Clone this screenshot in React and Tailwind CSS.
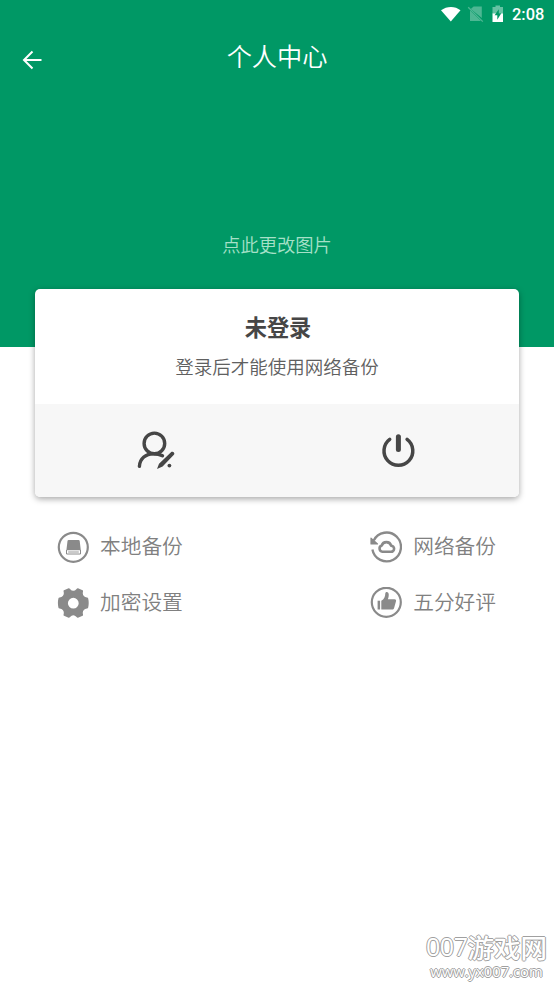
import React from "react";

const StatusBar = () => (
  <div className="flex h-7 items-center justify-end pr-[9px] text-white">
    <svg width="20" height="16" viewBox="0 0 20 16" className="shrink-0">
      <path d="M0 4.300C5.800 -.2 14.200 -.2 19.500 4.300L9.800 15.500Z" fill="currentColor" />
    </svg>
    <svg width="18" height="18" viewBox="0 0 18 18" className="ml-[6px] shrink-0">
      <path d="M6.600 1.500h8.200v11.600L3.800 3.900ZM3 5.200 14 16H3Z" fill="#4db793" />
      <path d="M1.200 2.200 15.800 16.600" stroke="#4db793" strokeWidth="1.300" />
    </svg>
    <svg width="12" height="18" viewBox="0 0 12 18" className="ml-[7px] shrink-0">
      <path d="M3.500 2V.5H8V2h3v7H.5V2Z" fill="#66c2a3" />
      <path d="M.5 8.500H11V17H.5Z" fill="currentColor" />
      <path d="M6.800 4.200 2.600 10.300h2.700v4.500l4-6.500H6.800Z" fill="#009865" />
    </svg>
    <span className="ml-[8px] w-[33px] whitespace-nowrap pt-px font-['Roboto',sans-serif] text-[16.400px] font-medium leading-7">2:08</span>
  </div>
);

const UserEditIcon = () => (
  <svg width="40" height="40" viewBox="0 0 40 40" fill="none" stroke="#464646" strokeWidth="3.400" strokeLinecap="round">
    <circle cx="18.400" cy="13.400" r="10.300" />
    <path d="M3.400 36.300C3.900 28.500 10 23.700 17.300 23.700c3.600 0 6.300.5 9.200 2" />
    <path d="M35 22.200c1.500-1.500 4.500.8 2.900 2.600L26.600 36.600l-5.600 2.400 2-5.200Z" fill="#464646" stroke="none" />
    <circle cx="33.400" cy="35.600" r="1.900" fill="#464646" stroke="none" />
  </svg>
);

const PowerIcon = () => (
  <svg width="40" height="40" viewBox="0 0 40 40" fill="none" stroke="#464646" strokeLinecap="round">
    <path d="M11.700 9.400a14.400 14.400 0 1 0 17.400 0" strokeWidth="3.500" />
    <path d="M20.400 6.800v12.600" strokeWidth="5" />
  </svg>
);

const DiskIcon = () => (
  <svg width="32" height="32" viewBox="0 0 32 32">
    <circle cx="16.300" cy="16.300" r="14.500" fill="none" stroke="#8a8a8a" strokeWidth="2.200" />
    <path d="M11.600 9h10q.9 0 1.100.9l1.100 9.400H9.400l1.100-9.400q.1-.9 1.100-.9Z" fill="#8a8a8a" />
    <path d="M9.500 19v4h14v-4" fill="none" stroke="#8a8a8a" />
    <path d="M11.200 21h10.600" stroke="#8a8a8a" strokeWidth=".9" />
  </svg>
);

const CloudIcon = () => (
  <svg width="32" height="32" viewBox="0 0 32 32" fill="none" stroke="#8a8a8a">
    <path d="M3.700 9.500A14.400 14.400 0 1 1 2.400 18.500" strokeWidth="2.300" />
    <path d="M1 7.200v5.800h6.500Z" fill="#8a8a8a" strokeWidth="1.200" strokeLinejoin="round" />
    <path d="M12.400 20.800h8.500a3.100 3.100 0 0 0 .2-6.200 4.900 4.900 0 0 0-9.400 0 3.200 3.200 0 0 0 .7 6.200Z" strokeWidth="2.600" strokeLinejoin="round" />
  </svg>
);

const GearIcon = () => (
  <svg width="32" height="32" viewBox="0 0 32 32">
    <path
      fillRule="evenodd"
      fill="#8a8a8a"
      d="M7 3.200 11.600 1.200Q12.500 1 13 1.900Q16.300 5.600 19.600 1.900Q20.100 1 21 1.200L25.600 3.200Q26.300 3.600 26 4.500Q24.800 9.600 30 10.500Q31 10.700 31.200 11.500Q32.200 16 31.200 20.500Q31 21.300 30 21.500Q24.800 22.400 26 27.500Q26.300 28.400 25.600 28.800L21 30.800Q20.100 31 19.600 30.100Q16.300 26.400 13 30.100Q12.500 31 11.600 30.800L7 28.800Q6.300 28.400 6.600 27.500Q7.800 22.400 2.600 21.500Q1.600 21.300 1.400 20.500Q.4 16 1.400 11.500Q1.600 10.700 2.600 10.500Q7.800 9.600 6.600 4.500Q6.300 3.600 7 3.200ZM16.300 10.800a5.400 5.400 0 1 0 0 10.800a5.400 5.400 0 1 0 0-10.800Z"
    />
  </svg>
);

const ThumbIcon = () => (
  <svg width="32" height="32" viewBox="0 0 32 32">
    <circle cx="16.300" cy="15.300" r="14.500" fill="none" stroke="#8a8a8a" strokeWidth="2.200" />
    <path d="M7.600 13.700h2.500v8.800H7.600Z" fill="#8a8a8a" />
    <path d="M11.300 13.800c2.900-1.300 3.900-4 4-7.200.1-2.300 3.200-2 3.400.5.200 1.700-.2 3.600-.8 5.200h6.600c1.200 0 1.900.9 1.500 2l-1.900 6.600c-.3 1.100-1 1.600-2.100 1.600H11.300Z" fill="#8a8a8a" />
  </svg>
);

const MenuItem = ({ icon, label }) => (
  <div className="flex h-14 items-center gap-[11px]">
    {icon}
    <span className="mb-[5px] text-[20.700px] font-[350] leading-8 text-[#808080]">{label}</span>
  </div>
);

export default function App() {
  return (
    <div className="relative min-h-[986px] w-full overflow-hidden bg-white font-['Noto_Sans_CJK_SC',sans-serif]">
      <header className="h-[347px] bg-[#009865]">
        <StatusBar />
        <div className="grid h-16 grid-cols-[1fr_auto_1fr] items-center">
          <svg width="20" height="20" viewBox="0 0 20 20" fill="none" stroke="#fff" strokeWidth="2" className="ml-[22px]">
            <path d="M19.500 10H2M10.500 1.500 2 10l8.500 8.500" />
          </svg>
          <h1 className="mb-[11px] text-[25.200px] font-[350] leading-9 text-white">个人中心</h1>
        </div>
        <p className="mt-[137px] text-center text-[18.300px] font-[350] leading-[30px] text-[#a6e0c8]">点此更改图片</p>
      </header>

      <section className="relative mx-[35px] -mt-[58px] h-[208px] overflow-hidden rounded-[5px] bg-white shadow-[0_2px_6px_rgba(0,0,0,0.35)]">
        <div className="flex h-[115px] flex-col items-center pt-[21px]">
          <h2 className="pl-[2px] text-[22.200px] font-bold leading-8 text-[#464646]">未登录</h2>
          <p className="mt-[10px] text-[18.500px] font-[350] leading-7 text-[#606060]">登录后才能使用网络备份</p>
        </div>
        <div className="grid h-[93px] grid-cols-2 place-items-center bg-[#f7f7f7] pb-px">
          <UserEditIcon />
          <PowerIcon />
        </div>
      </section>

      <section className="mt-[22px] flex justify-between pl-[57px] pr-[58px]">
        <div>
          <MenuItem icon={<DiskIcon />} label="本地备份" />
          <MenuItem icon={<GearIcon />} label="加密设置" />
        </div>
        <div>
          <MenuItem icon={<CloudIcon />} label="网络备份" />
          <MenuItem icon={<ThumbIcon />} label="五分好评" />
        </div>
      </section>

      <div className="absolute bottom-[6px] right-0 flex w-[135px] flex-col items-center gap-px whitespace-nowrap text-white [text-shadow:1px_0_0_#a0a0a0,-1px_0_0_#a0a0a0,0_1px_0_#a0a0a0,0_-1px_0_#a0a0a0]">
        <span className="flex items-center leading-[29px]">
          <span className="font-['Open_Sans',sans-serif] text-[25px] tracking-[-0.500px]">007</span>
          <span className="text-[26.500px] font-medium">游戏网</span>
        </span>
        <span className="font-['Open_Sans',sans-serif] text-[14.800px] leading-[18px]">www.yx007.com</span>
      </div>
    </div>
  );
}
